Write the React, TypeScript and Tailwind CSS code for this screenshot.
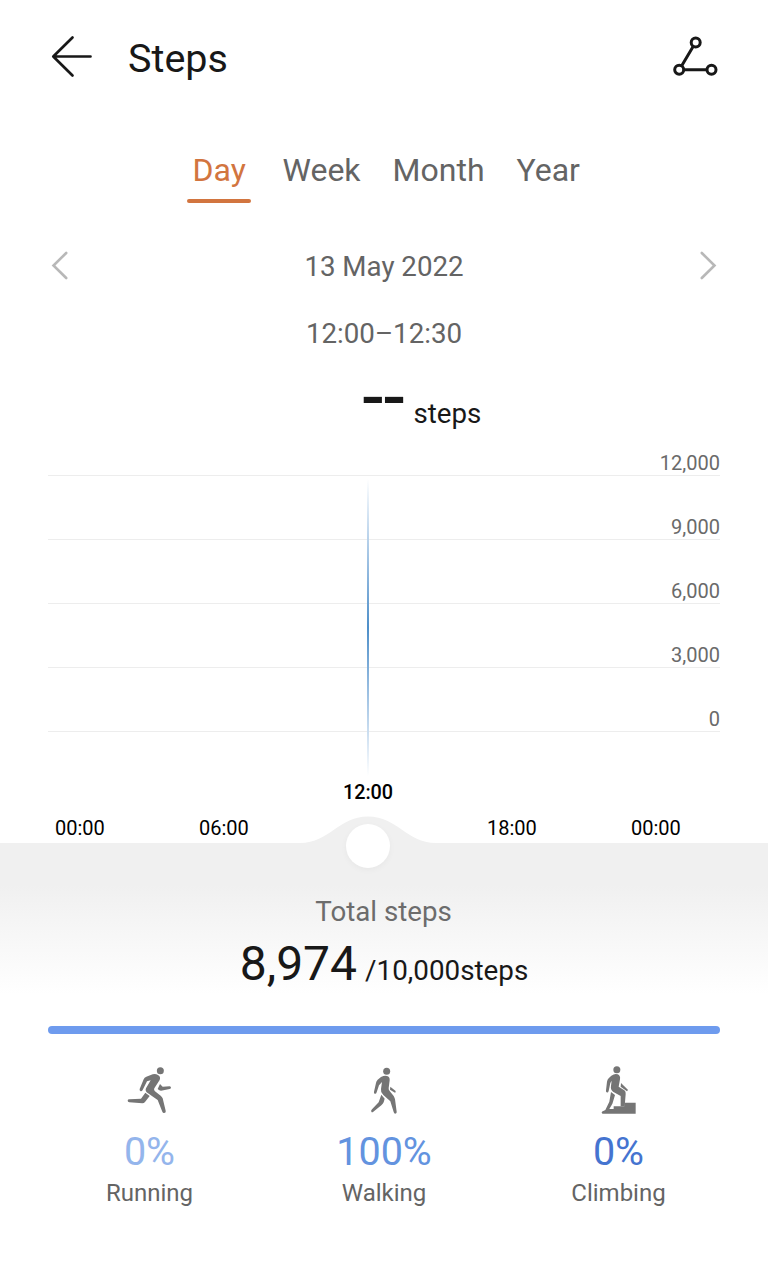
import type { ReactNode } from "react";

const gridLabels = ["12,000", "9,000", "6,000", "3,000", "0"];
const tabs = [
  { label: "Day", active: true },
  { label: "Week", active: false },
  { label: "Month", active: false },
  { label: "Year", active: false },
];

function BackIcon() {
  return (
    <svg className="h-12 w-12" viewBox="0 0 48 48" fill="none" stroke="#181818" strokeWidth="2.7" strokeLinecap="round" strokeLinejoin="round">
      <path d="M42.500 24.500H5.500M24.500 5.500L5.300 24.500L24.500 43.500" />
    </svg>
  );
}

function TrackIcon() {
  return (
    <svg className="h-12 w-12" viewBox="0 0 48 48" fill="none" stroke="#181818" strokeWidth="3" strokeLinecap="round">
      <circle cx="25.700" cy="10.500" r="4.500" />
      <circle cx="9.200" cy="37.700" r="4.500" />
      <circle cx="41.500" cy="37.700" r="4.500" />
      <path d="M23 14.800L12 33.200M14.300 37.700H36.600" />
    </svg>
  );
}

function Chevron({ flip }: { flip?: boolean }) {
  return (
    <svg className={flip ? "h-8 w-6 -scale-x-100" : "h-8 w-6"} viewBox="0 0 24 32" fill="none" stroke="#b8b8b8" strokeWidth="2.600" strokeLinecap="round" strokeLinejoin="miter">
      <path d="M18.200 3L5.500 15.500L18.200 28" />
    </svg>
  );
}

function RunningIcon() {
  return (
    <svg className="h-[50px] w-[50px]" viewBox="45 29 150 150" fill="#757575">
      <circle cx="151" cy="46.500" r="10.500" />
      <path d="M101 72Q103 66 109 64L128 57Q136 54 144 59Q153 64 149 74L133 99Q131 103 134 107L152 121Q156 124 158 129L167 166Q169 172 163 173Q159 174 157 169L143 134L114 114Q104 108 108 99L122 75L111 78L98 104Q95 109 91 107Q88 106 89 101Z" />
      <path d="M150 86L158 94L179 93Q183 94 183 97Q183 100 179 101L153 106Q148 106 143 101Z" />
      <path d="M106 112L119 122L105 140Q102 144 97 144L58 141Q53 140 53 136Q53 132 58 132L93 130Z" />
    </svg>
  );
}

function WalkingIcon() {
  return (
    <svg className="h-[50px] w-[50px]" viewBox="28 29 150 150" fill="#757575">
      <circle cx="111" cy="47.500" r="10.500" />
      <path d="M94 65Q104 60 112 62Q121 64 120 75L117 98Q116 103 120 107L132 122Q135 127 136 132L141 169Q142 174 137 175Q133 175 132 170L122 138L101 119Q92 110 94 101L97 80L88 90L81 111Q79 117 75 115Q72 114 73 109L79 83Q80 77 84 73Z" />
      <path d="M95 118L105 130L102 141Q100 146 95 150L71 169Q67 172 65 169Q63 166 67 162L87 141Z" />
      <path d="M122 94L137 106Q140 110 136 112L121 103Z" />
    </svg>
  );
}

function ClimbingIcon() {
  return (
    <svg className="h-[50px] w-[50px]" viewBox="27 29 150 150" fill="#757575">
      <circle cx="95.500" cy="43" r="10.500" />
      <path d="M79 61Q90 53 98 57Q107 61 105 72L101 94L118 105Q123 109 122 116L119 153H107L107 122L84 109Q76 103 78 92L80 76L76 83L71 107Q69 113 65 111Q62 110 63 105L66 79Q67 73 71 69Z" />
      <path d="M78 110L90 119L84 139Q83 144 80 149L73 161H86V153H118V142H152V175H53Q50 175 50 171Q51 168 55 167L61 164L73 139Z" />
      <path d="M108 83L127 102Q130 106 126 108L107 94Z" />
    </svg>
  );
}

function Metric({ icon, value, label, color }: { icon: ReactNode; value: string; label: string; color: string }) {
  return (
    <div className="flex w-[234.500px] flex-col items-center">
      {icon}
      <div className={`mt-[12px] text-[39.5px] leading-[50px] ${color}`}>{value}</div>
      <div className="text-[24px] leading-[32px] text-[#646464]">{label}</div>
    </div>
  );
}

export default function App() {
  return (
    <main className="flex h-[1262px] w-[768px] flex-col overflow-hidden bg-white font-['Roboto',sans-serif] text-[#181818]">
      <header className="flex h-[116px] shrink-0 items-center pr-[50px] pl-12">
        <div className="mb-[5px]"><BackIcon /></div>
        <h1 className="ml-8 flex-1 pt-px text-[39.5px] leading-[56px]">Steps</h1>
        <div className="mb-[5px]"><TrackIcon /></div>
      </header>

      <nav className="flex h-[110px] shrink-0 items-start pt-[34px] pl-[187px] text-[32px] leading-10 text-[#646464]">
        {tabs.map((tab) =>
          tab.active ? (
            <div key={tab.label} className="mr-[32px] flex w-[63.5px] flex-col items-center text-[#d2753f]">
              <span className="pl-px">{tab.label}</span>
              <span className="mt-[9px] h-1 w-full rounded-full bg-[#d2753f]" />
            </div>
          ) : (
            <div key={tab.label} className="mr-8">{tab.label}</div>
          ),
        )}
      </nav>

      <div className="flex h-20 shrink-0 items-center justify-between px-12 text-[27.7px] text-[#646464]">
        <Chevron />
        <span className="pt-[2px]">13 May 2022</span>
        <Chevron flip />
      </div>
      <div className="flex h-[56px] shrink-0 items-center justify-center text-[27.7px] text-[#646464]">12:00–12:30</div>

      <div className="flex h-[113px] shrink-0 items-start pt-[11px] pl-[360px]">
        <span className="h-[50px] w-[53.5px] origin-left scale-x-[1.2] text-[55px] leading-[50px] font-bold tracking-[-4px]">--</span>
        <span className="pt-[23px] text-[27.7px] leading-[36px]">steps</span>
      </div>

      <section className="relative h-[368px] shrink-0">
        <div className="mx-12">
          {gridLabels.map((label) => (
            <div key={label} className="relative h-16 border-t border-[#ededed]">
              <span className="absolute -top-[25px] right-0 text-[20px] leading-6 text-[#6a6a6a]">{label}</span>
            </div>
          ))}
        </div>
        <div className="absolute top-[4px] left-[367px] h-[297px] w-[2px] bg-linear-to-b from-white via-[#4d8fc9] to-white" />
        <div className="absolute top-[306px] left-[308px] w-[120px] text-center text-[19.8px] leading-6 font-medium text-black">12:00</div>
        <div className="flex pt-[21px] pl-[55px] text-[20px] leading-6 text-black">
          <span className="w-[144px]">00:00</span>
          <span className="w-[288px]">06:00</span>
          <span className="w-[144px]">18:00</span>
          <span>00:00</span>
        </div>
      </section>

      <section className="relative flex h-[419px] shrink-0 flex-col items-center bg-linear-to-b from-[#f0f0f0] from-[10%] to-white to-[36%]">
        <svg className="absolute -top-[28px] left-[292px] h-[30px] w-[152px]" viewBox="0 0 152 30" fill="#f0f0f0">
          <path d="M8 28C38 28 46 1.500 76 1.500S114 28 144 28V30H8Z" />
        </svg>
        <div className="absolute -top-[19px] left-[346px] h-11 w-11 rounded-full bg-white shadow-[0_2px_6px_rgba(0,0,0,0.04)]" />
        <div className="pt-[50px] pr-px text-[27.7px] leading-[38px] text-[#6c6c6c]">Total steps</div>
        <div className="mt-[2px] flex items-baseline text-[#181818]">
          <span className="text-[48px] leading-[62px]">8,974</span>
          <span className="ml-[8px] text-[27.8px]">/10,000steps</span>
        </div>
        <div className="mt-[31px] h-2 w-[672px] rounded-full bg-[#6e9bee]" />
        <div className="mt-[31px] flex">
          <Metric icon={<RunningIcon />} value="0%" label="Running" color="text-[#94b5ec]" />
          <Metric icon={<WalkingIcon />} value="100%" label="Walking" color="text-[#6393df]" />
          <Metric icon={<ClimbingIcon />} value="0%" label="Climbing" color="text-[#4574d0]" />
        </div>
      </section>
    </main>
  );
}
